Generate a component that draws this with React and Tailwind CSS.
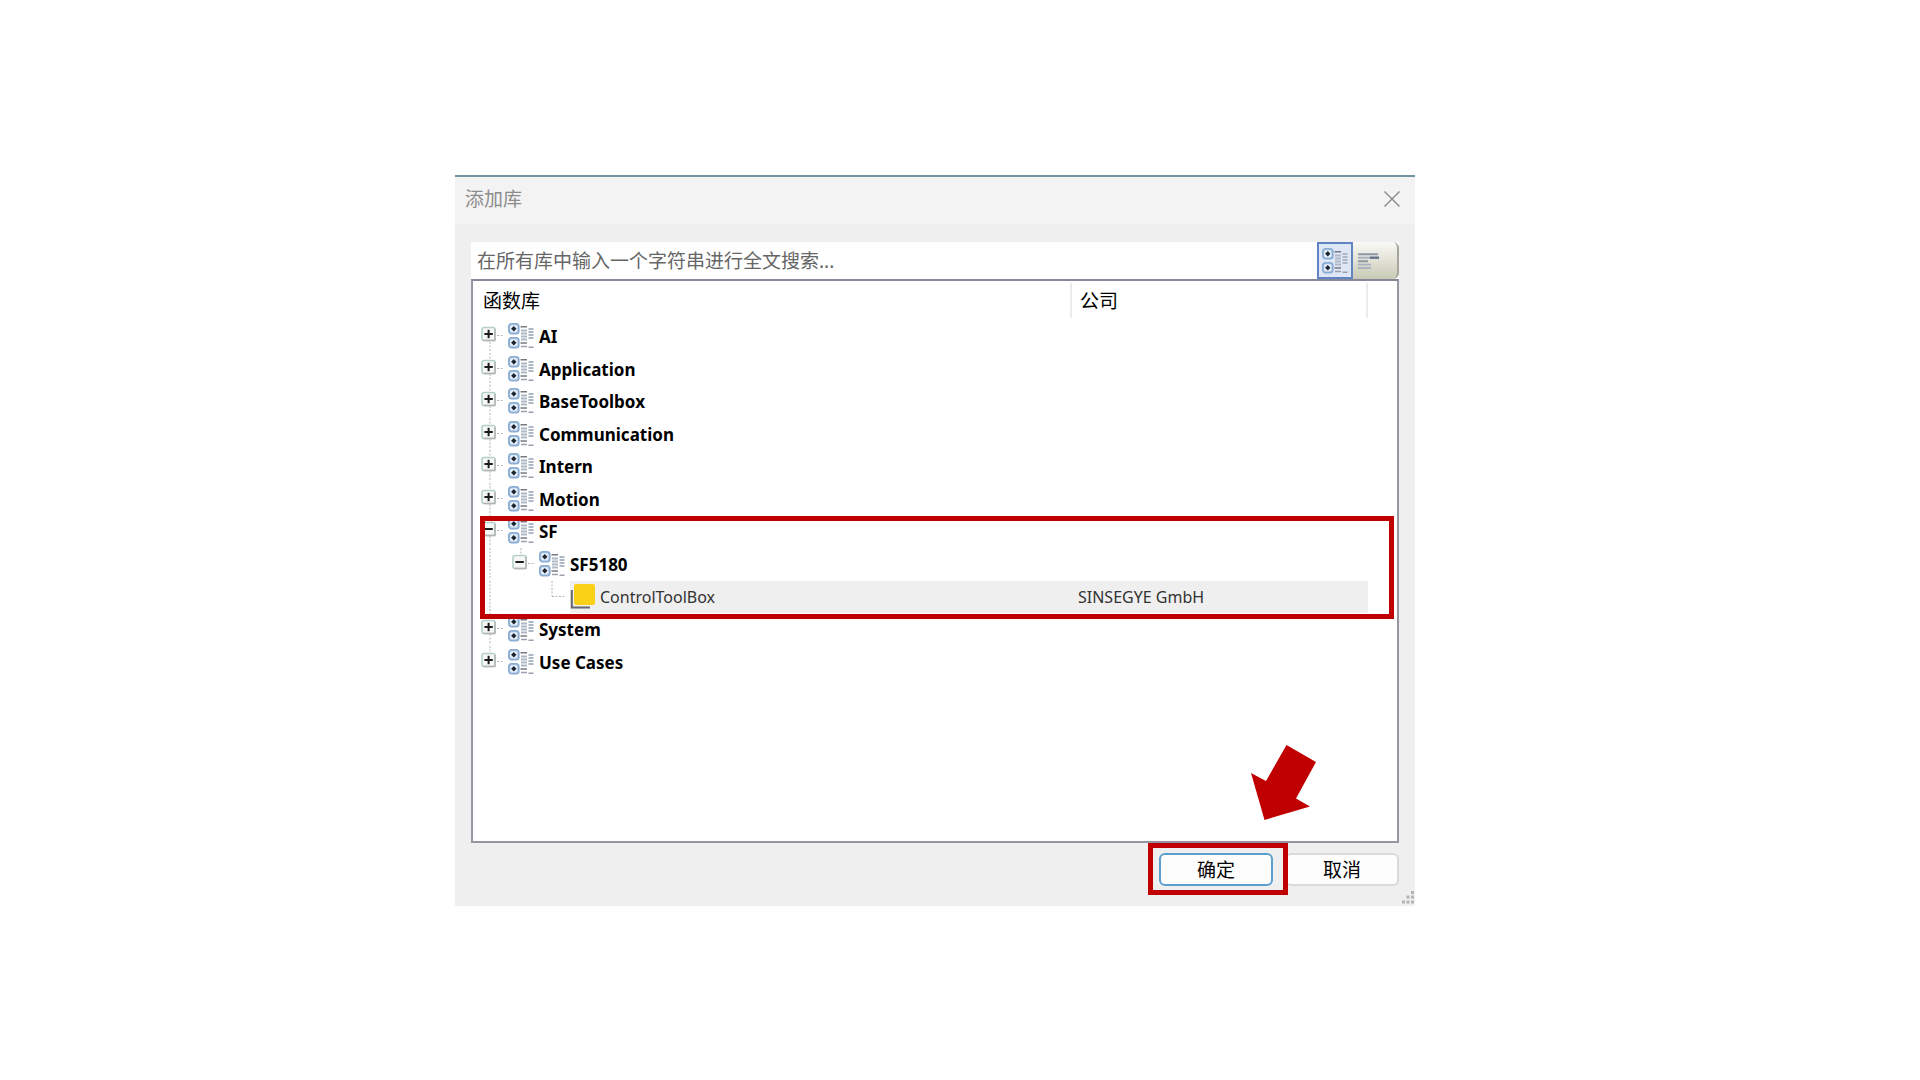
import { useState } from 'react';

const ROWS = [
  { name: 'AI', level: 0, expander: 'plus', first: true },
  { name: 'Application', level: 0, expander: 'plus' },
  { name: 'BaseToolbox', level: 0, expander: 'plus' },
  { name: 'Communication', level: 0, expander: 'plus' },
  { name: 'Intern', level: 0, expander: 'plus' },
  { name: 'Motion', level: 0, expander: 'plus' },
  { name: 'SF', level: 0, expander: 'minus' },
  { name: 'SF5180', level: 1, expander: 'minus', last: true },
  { name: 'ControlToolBox', level: 2, company: 'SINSEGYE GmbH', last: true },
  { name: 'System', level: 0, expander: 'plus' },
  { name: 'Use Cases', level: 0, expander: 'plus', last: true },
];

function GroupIcon() {
  return (
    <svg width="26" height="26" viewBox="0 0 26 26" className="shrink-0" aria-hidden="true">
      {[0, 14].map((y) => (
        <g key={y}>
          <rect x="0.9" y={y + 0.9} width="9.8" height="9.8" rx="2.6" fill="#cfe0f3" stroke="#8badd3" strokeWidth="1.8" />
          <circle cx="5.8" cy={y + 5.8} r="3.3" fill="#eef4fb" />
          <path d={`M5.8 ${y + 3.1}L8.5 ${y + 5.8}L5.8 ${y + 8.5}L3.1 ${y + 5.8}Z`} fill="#1b2534" />
        </g>
      ))}
      <path d="M12.5 3.7h6.5M12.5 20h6.5" stroke="#777b80" strokeWidth="1.6" />
      <path d="M13 7.5h6M13 10.5h6M13 13.5h6M13 16.5h6M20.5 6h5M20.5 9h5M20.5 12h5M20.5 15h5" stroke="#adb7c6" strokeWidth="1.9" />
      <path d="M13 23.5h6M20.5 24.3h5" stroke="#98a1ad" strokeWidth="1.5" />
    </svg>
  );
}

function LibraryIcon() {
  return (
    <svg width="26" height="26" viewBox="0 0 26 26" className="shrink-0" aria-hidden="true">
      <path d="M1.8 6v17.5H20" fill="none" stroke="#66676a" strokeWidth="2" />
      <rect x="4" y="0" width="21" height="21" rx="2" fill="#fbd116" />
    </svg>
  );
}

function FlatIcon() {
  return (
    <svg width="24" height="18" viewBox="0 0 24 18" aria-hidden="true">
      <path d="M1 2.2h20M1 9.2h10" stroke="#8e98a6" strokeWidth="2" />
      <path d="M1 5.7h13" stroke="#a9b2be" strokeWidth="2" />
      <path d="M13 5.7h9" stroke="#657188" strokeWidth="2.4" />
      <path d="M1 12.7h13M1 16h13" stroke="#a9b2be" strokeWidth="1.8" />
    </svg>
  );
}

// dotted connector lines with the +/- box on top
function Branch({ expander, first, last }) {
  return (
    <svg width="27" height="32" viewBox="0 0 27 32" className="shrink-0" aria-hidden="true">
      <path d={`M9 ${first ? 15 : 0}V${last ? 15 : 33}`} stroke="#b4b4b4" strokeDasharray="2 1.5" />
      <path d="M9 15.5H23" stroke="#b4b4b4" strokeDasharray="2 1.5" />
      {expander && (
        <>
          <rect x="1" y="7.5" width="13" height="13" rx="2" fill="#f7f8f6" stroke="#b5d0ca" strokeWidth="1.6" />
          <path d="M2.5 20.5H14V9" fill="none" stroke="#b3b4b2" strokeWidth="1.4" />
          <path d="M3.4 14H11.8" stroke="#1c1c1c" strokeWidth="2" />
          {expander === 'plus' && <path d="M7.6 9.8V18.2" stroke="#1c1c1c" strokeWidth="2" />}
        </>
      )}
    </svg>
  );
}

function Guide({ visible }) {
  return (
    <svg width="31" height="32" viewBox="0 0 31 32" className="shrink-0" aria-hidden="true">
      {visible && <path d="M9 0V33" stroke="#b4b4b4" strokeDasharray="2 1.5" />}
    </svg>
  );
}

function TreeRow({ row }) {
  const leaf = !row.expander;
  return (
    <tr>
      <td className="p-0">
        <div className="flex items-center pl-2">
          {row.level > 0 && <Guide visible />}
          {row.level > 1 && <Guide />}
          <Branch {...row} />
          <div className={leaf ? 'flex h-8 flex-1 items-center gap-1 bg-[#efefef] text-base text-[#333]' : 'flex h-8 flex-1 items-center gap-[5px] font-bold'}>
            {leaf ? <LibraryIcon /> : <GroupIcon />}
            <span className={leaf ? '' : 'pt-[2px]'}>{row.name}</span>
          </div>
        </div>
      </td>
      <td className="p-0">
        <div className={leaf ? 'flex h-8 items-center bg-[#efefef] pl-[6px] text-base text-[#333]' : 'h-8'}>{row.company}</div>
      </td>
      <td className="p-0" />
    </tr>
  );
}

export default function App() {
  const [query, setQuery] = useState('');

  return (
    <main className="flex min-h-screen items-start justify-center bg-white pt-[175px] pr-[50px] font-['Noto_Sans','Noto_Sans_CJK_SC',sans-serif] text-black">
      <section className="relative w-full max-w-[960px] border-t-2 border-[#7295a6] bg-[#efefef]">
        <header className="flex h-[47px] items-center justify-between bg-[#f3f3f3] pr-[14px] pb-1 pl-[10px]">
          <h1 className="text-[19px] leading-6 text-[#8c8c8c]">添加库</h1>
          <button type="button" aria-label="关闭" className="p-0">
            <svg width="18" height="18" viewBox="0 0 18 18">
              <path d="M1.5 1.5L16.5 16.5M16.5 1.5L1.5 16.5" stroke="#888" strokeWidth="1.4" />
            </svg>
          </button>
        </header>

        <div className="px-4 pt-[18px] pb-5">
          <div className="flex h-[37px] items-stretch bg-white">
            <input
              type="text"
              aria-label="搜索"
              value={query}
              onChange={(e) => setQuery(e.target.value)}
              placeholder="在所有库中输入一个字符串进行全文搜索..."
              className="min-w-0 flex-1 bg-white px-[6px] pt-[2px] text-[19px] text-[#666] outline-none placeholder:text-[#666]"
            />
            <div className="flex w-[82px] items-stretch rounded-r-md border-r-2 border-[#a5a59c] bg-linear-to-b from-[#fafaf7] to-[#c9c9b6]">
              <button type="button" aria-label="分组" className="flex w-9 items-center justify-center border-2 border-[#5f83c3] bg-[#dfe6f5]">
                <GroupIcon />
              </button>
              <button type="button" aria-label="列表" className="flex flex-1 items-center pl-1">
                <FlatIcon />
              </button>
            </div>
          </div>

          <div className="relative h-[564px] border-2 border-[#9497a1] border-t-[#858896] bg-white">
            <table className="h-[397px] w-full table-fixed border-collapse text-[17px] leading-6">
              <colgroup>
                <col />
                <col className="w-[296px]" />
                <col className="w-[29px]" />
              </colgroup>
              <thead>
                <tr className="h-[39px] text-left text-[19px]">
                  <th className="p-0 font-normal">
                    <div className="flex h-[35px] items-center border-r-2 border-[#ebebeb] pl-[10px]">函数库</div>
                  </th>
                  <th className="p-0 font-normal">
                    <div className="flex h-[35px] items-center border-r-2 border-[#ebebeb] pl-2">公司</div>
                  </th>
                  <th className="p-0" />
                </tr>
              </thead>
              <tbody>
                {ROWS.map((row) => (
                  <TreeRow key={row.name} row={row} />
                ))}
              </tbody>
            </table>

            <div className="pointer-events-none absolute top-[235px] right-[3px] left-[7px] h-[103px] border-5 border-[#c00000]" />
            <svg width="66" height="76" viewBox="0 0 66 76" className="pointer-events-none absolute right-20 bottom-5" aria-hidden="true">
              <path d="M35.5 0L65 17L45 53.5L59 61.5L13.5 75L0 28L15 36Z" fill="#c00000" />
            </svg>
          </div>

          <footer className="flex justify-end gap-3 pt-[10px]">
            <div className="relative">
              <button type="button" className="h-[33px] w-[114px] rounded-md border-2 border-[#5b9fcf] bg-[#fdfdfd] text-[19px] leading-6">
                确定
              </button>
              <div className="pointer-events-none absolute -top-[10px] -right-[15px] -bottom-[9px] -left-[11px] z-10 border-5 border-[#c00000]" />
            </div>
            <button type="button" className="h-[33px] w-[114px] rounded-md border-2 border-[#dadada] bg-[#fdfdfd] text-[19px] leading-6">
              取消
            </button>
          </footer>
        </div>

        <svg width="14" height="16" viewBox="0 0 14 16" className="absolute right-0 bottom-0" aria-hidden="true">
          <path d="M10 1h3v3h-3zM5.5 5.5h3v3h-3zM10 5.5h3v3h-3zM1 10.5h3v3h-3zM5.5 10.5h3v3h-3zM10 10.5h3v3h-3z" fill="#b5b5b5" />
        </svg>
      </section>
    </main>
  );
}
